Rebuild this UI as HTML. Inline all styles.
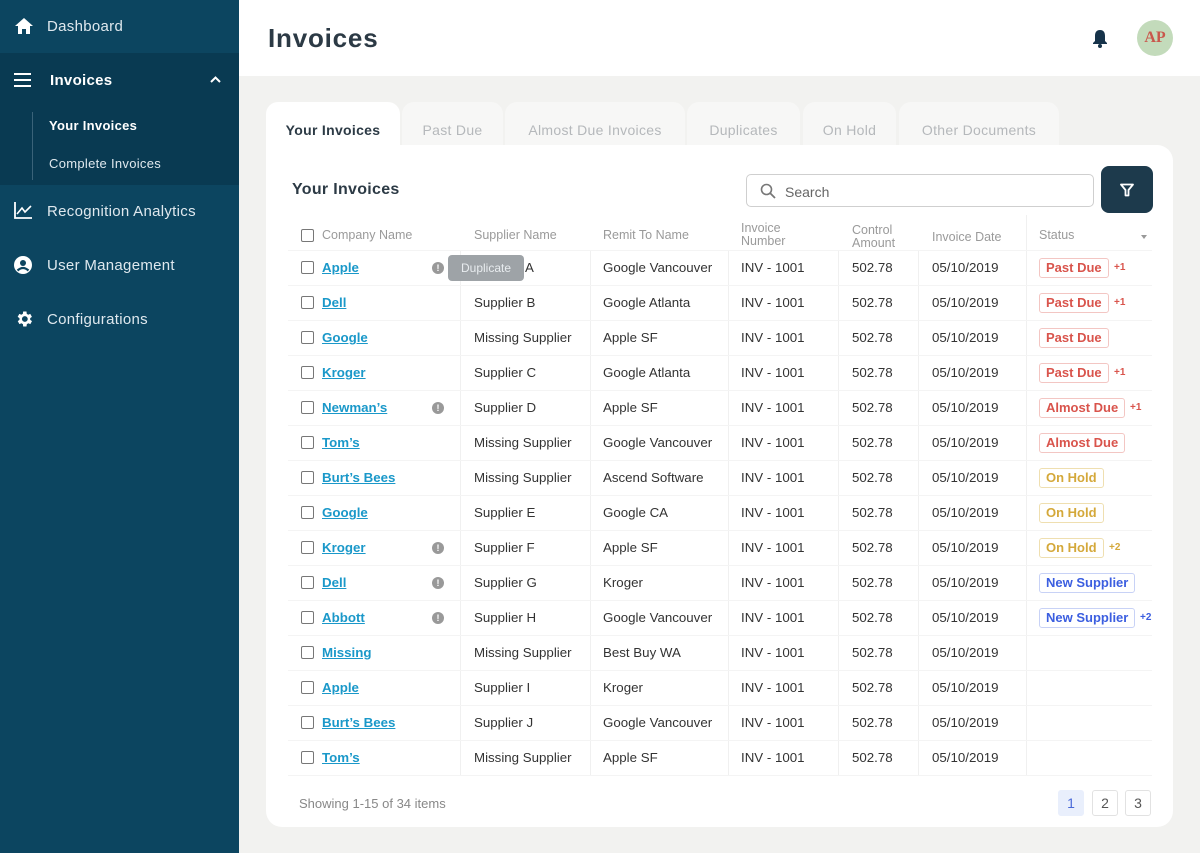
<!DOCTYPE html>
<html><head><meta charset="utf-8"><style>
*{box-sizing:border-box;margin:0;padding:0}
body{width:1200px;height:853px;overflow:hidden;background:#f2f2f0;font-family:"Liberation Sans",sans-serif;position:relative}
.sb{position:absolute;left:0;top:0;width:239px;height:853px;background:#0c4560}
.sbx{position:absolute;left:0;top:53px;width:239px;height:132px;background:#093a52}
.ni{position:absolute;left:47px;color:#dfe8ee;font-size:15px;letter-spacing:.3px}
.ic{position:absolute;left:14px}
.top{position:absolute;left:239px;top:0;width:961px;height:76px;background:#fff}
.tab{position:absolute;top:102px;height:44px;background:#f7f7f6;border-radius:12px 12px 0 0;color:#b5b8bb;font-size:14px;text-align:center;line-height:56px;letter-spacing:.3px}
.card{position:absolute;left:266px;top:145px;width:907px;height:682px;background:#fff;border-radius:0 16px 16px 16px}
.c{position:absolute;font-size:13.3px;color:#333;white-space:nowrap}
.h{position:absolute;font-size:12.5px;color:#9a9a9a;line-height:13px}
.cb{position:absolute;left:301px;width:13px;height:13px;border:1.5px solid #777;border-radius:2px}
.lk{color:#1a98c9;text-decoration:underline;font-weight:bold}
.rl{position:absolute;left:288px;width:864px;height:1px;background:#f4f4f4}
.vl{position:absolute;width:1px;background:#f0f0f0;top:250px;height:525px}
.bd{position:absolute;left:1039px;height:20px;padding:0 6px;border-radius:3px;font-size:13px;font-weight:bold;line-height:18px;border:1px solid}
.pd{color:#d9544c;border-color:#f3c6c3}
.oh{color:#d4a83a;border-color:#efdfb0}
.ns{color:#3b5ee0;border-color:#c8d2f6}
.pl{position:absolute;font-size:10px;font-weight:bold}
.warn{position:absolute;left:432px;width:12px;height:12px;border-radius:50%;background:#999;color:#fff;font-size:9px;font-weight:bold;text-align:center;line-height:12px}
.pg{position:absolute;top:790px;width:26px;height:26px;border:1px solid #e2e2e2;border-radius:3px;font-size:14px;color:#555;text-align:center;line-height:24px}
</style></head><body>
<div class="sb"></div><div class="sbx"></div>
<svg class="ic" style="top:17px" width="20" height="18" viewBox="0 0 20 18"><path d="M10 1 L1 9 H4 V17 H8 V12 H12 V17 H16 V9 H19 Z" fill="#fff"/></svg>
<div class="ni" style="top:18px">Dashboard</div>
<svg class="ic" style="top:73px" width="18" height="14"><rect x="0" y="0" width="17" height="2" fill="#fff"/><rect x="0" y="6" width="17" height="2" fill="#fff"/><rect x="0" y="12" width="17" height="2" fill="#fff"/></svg>
<div class="ni" style="top:72px;left:50px;font-weight:bold;color:#fff">Invoices</div>
<svg style="position:absolute;left:210px;top:76px" width="11" height="7"><path d="M1 6 L5.5 1.5 L10 6" stroke="#fff" stroke-width="2" fill="none"/></svg>
<div style="position:absolute;left:32px;top:112px;width:1px;height:68px;background:#3a6379"></div>
<div class="ni" style="top:118px;left:49px;font-size:13px;font-weight:bold;color:#fff">Your Invoices</div>
<div class="ni" style="top:156px;left:49px;font-size:13px">Complete Invoices</div>
<svg class="ic" style="top:202px" width="19" height="17"><path d="M1 0 V16 H18" stroke="#fff" stroke-width="1.8" fill="none"/><path d="M3 12 L8 6 L11 10 L17 4" stroke="#fff" stroke-width="1.6" fill="none"/></svg>
<div class="ni" style="top:203px">Recognition Analytics</div>
<svg class="ic" style="top:256px" width="18" height="18"><circle cx="9" cy="9" r="9" fill="#fff"/><circle cx="9" cy="7" r="3" fill="#0c4560"/><path d="M3.5 14.5 Q9 9.5 14.5 14.5" stroke="#0c4560" stroke-width="2.2" fill="none"/></svg>
<div class="ni" style="top:257px">User Management</div>
<svg class="ic" style="top:309px" width="20" height="20" viewBox="0 0 24 24"><path fill="#fff" d="M19.4 13a7.5 7.5 0 0 0 0-2l2.1-1.6-2-3.5-2.5 1a7.6 7.6 0 0 0-1.7-1L15 3h-4l-.4 2.9a7.6 7.6 0 0 0-1.7 1l-2.5-1-2 3.5L6.6 11a7.5 7.5 0 0 0 0 2l-2.1 1.6 2 3.5 2.5-1a7.6 7.6 0 0 0 1.7 1L11 21h4l.4-2.9a7.6 7.6 0 0 0 1.7-1l2.5 1 2-3.5zM13 15.5a3.5 3.5 0 1 1 0-7 3.5 3.5 0 0 1 0 7z"/></svg>
<div class="ni" style="top:311px">Configurations</div>

<div class="top"></div>
<div style="position:absolute;left:268px;top:23px;font-size:26px;font-weight:bold;color:#2c3a45;letter-spacing:.8px">Invoices</div>
<svg style="position:absolute;left:1091px;top:29px" width="18" height="19"><path d="M9 1 C5 1 4 4 4 7 V12 L2 14 V15 H16 V14 L14 12 V7 C14 4 13 1 9 1Z" fill="#16334a"/><circle cx="9" cy="17" r="2" fill="#16334a"/></svg>
<div style="position:absolute;left:1137px;top:20px;width:36px;height:36px;border-radius:50%;background:#c3dbbb;color:#c9574c;font-family:'Liberation Serif',serif;font-weight:bold;font-size:16px;text-align:center;line-height:36px">AP</div>

<div class="tab" style="left:266px;width:134px;background:#fff;color:#2c3a45;font-weight:bold">Your Invoices</div>
<div class="tab" style="left:402px;width:101px">Past Due</div>
<div class="tab" style="left:505px;width:180px">Almost Due Invoices</div>
<div class="tab" style="left:687px;width:113px">Duplicates</div>
<div class="tab" style="left:803px;width:93px">On Hold</div>
<div class="tab" style="left:899px;width:160px">Other Documents</div>
<div class="card"></div>
<div style="position:absolute;left:292px;top:181px;font-size:16px;font-weight:bold;color:#2c3a45;letter-spacing:.3px">Your Invoices</div>
<div style="position:absolute;left:746px;top:174px;width:348px;height:33px;border:1px solid #cfcfcf;border-radius:5px"></div>
<svg style="position:absolute;left:760px;top:183px" width="16" height="16"><circle cx="6.5" cy="6.5" r="5" stroke="#777" stroke-width="1.6" fill="none"/><path d="M10 10 L15 15" stroke="#777" stroke-width="1.8"/></svg>
<div class="c" style="left:785px;top:184px;color:#666;font-size:14px">Search</div>
<div style="position:absolute;left:1101px;top:166px;width:52px;height:47px;border-radius:8px;background:#1d3a4c"></div>
<svg style="position:absolute;left:1120px;top:183px" width="14" height="14"><path d="M1 1.5 H13 L8.5 7 V12.5 H5.5 V7 Z" stroke="#fff" stroke-width="1.8" fill="none" stroke-linejoin="round"/></svg>

<div class="cb" style="top:229px"></div>
<div class="h" style="left:322px;top:229px">Company Name</div>
<div class="h" style="left:474px;top:229px">Supplier Name</div>
<div class="h" style="left:603px;top:229px">Remit To Name</div>
<div class="h" style="left:741px;top:222px">Invoice<br>Number</div>
<div class="h" style="left:852px;top:224px">Control<br>Amount</div>
<div class="h" style="left:932px;top:231px">Invoice Date</div>
<div class="h" style="left:1039px;top:229px">Status</div>
<div style="position:absolute;left:1141px;top:235px;border:3.5px solid transparent;border-top:4px solid #999"></div>
<div class="vl" style="left:460px"></div><div class="vl" style="left:590px"></div><div class="vl" style="left:728px"></div><div class="vl" style="left:838px"></div><div class="vl" style="left:918px"></div><div class="vl" style="left:1026px;top:215px;height:560px"></div>

<div id="rows"></div>
<script>
var d=[["Apple","A","Google Vancouver","pd","Past Due","+1",1],["Dell","Supplier B","Google Atlanta","pd","Past Due","+1",0],["Google","Missing Supplier","Apple SF","pd","Past Due","",0],["Kroger","Supplier C","Google Atlanta","pd","Past Due","+1",0],["Newman’s","Supplier D","Apple SF","pd","Almost Due","+1",1],["Tom’s","Missing Supplier","Google Vancouver","pd","Almost Due","",0],["Burt’s Bees","Missing Supplier","Ascend Software","oh","On Hold","",0],["Google","Supplier E","Google CA","oh","On Hold","",0],["Kroger","Supplier F","Apple SF","oh","On Hold","+2",1],["Dell","Supplier G","Kroger","ns","New Supplier","",1],["Abbott","Supplier H","Google Vancouver","ns","New Supplier","+2",1],["Missing","Missing Supplier","Best Buy WA","","","",0],["Apple","Supplier I","Kroger","","","",0],["Burt’s Bees","Supplier J","Google Vancouver","","","",0],["Tom’s","Missing Supplier","Apple SF","","","",0]];
var col={pd:"#d9544c",oh:"#d4a83a",ns:"#3b5ee0"};
var h="";
d.forEach(function(r,i){var y=250+i*35,t=y+10;
h+='<div class="rl" style="top:'+(y)+'px"></div>';
h+='<div class="cb" style="top:'+(y+11)+'px"></div>';
h+='<div class="c lk" style="left:322px;top:'+t+'px">'+r[0]+'</div>';
if(r[6])h+='<div class="warn" style="top:'+(y+12)+'px">!</div>';
h+='<div class="c" style="left:'+(i==0?525:474)+'px;top:'+t+'px">'+r[1]+'</div>';
h+='<div class="c" style="left:603px;top:'+t+'px">'+r[2]+'</div>';
h+='<div class="c" style="left:741px;top:'+t+'px">INV - 1001</div>';
h+='<div class="c" style="left:852px;top:'+t+'px">502.78</div>';
h+='<div class="c" style="left:932px;top:'+t+'px">05/10/2019</div>';
if(r[3]){h+='<div class="bd '+r[3]+'" id="b'+i+'" style="top:'+(y+8)+'px">'+r[4]+'</div>';}
});
h+='<div class="rl" style="top:775px"></div>';
h+='<div style="position:absolute;left:448px;top:255px;width:76px;height:26px;background:#9ea3a7;border-radius:4px;color:#e8ecef;font-size:12px;text-align:center;line-height:26px">Duplicate</div>';
document.getElementById("rows").innerHTML=h;
d.forEach(function(r,i){if(r[5]){var b=document.getElementById("b"+i);var e=document.createElement("div");e.className="pl";e.style.color=col[r[3]];e.style.left=(b.offsetLeft+b.offsetWidth+5)+"px";e.style.top=(b.offsetTop+4)+"px";e.textContent=r[5];document.body.appendChild(e);}});
</script>
<div class="c" style="left:299px;top:796px;font-size:13px;color:#888">Showing 1-15 of 34 items</div>
<div class="pg" style="left:1058px;background:#e9effc;border-color:#e9effc;color:#4a6ad8">1</div>
<div class="pg" style="left:1092px">2</div>
<div class="pg" style="left:1125px">3</div>
</body></html>
